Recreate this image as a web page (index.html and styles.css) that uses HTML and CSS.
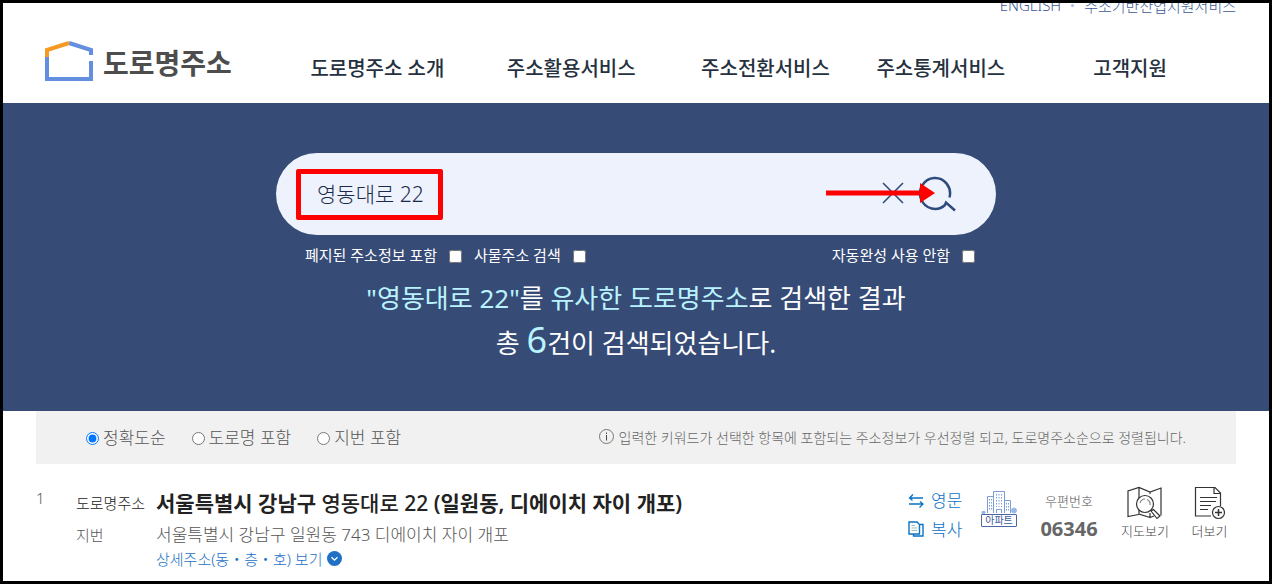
FILE: index.html
```html
<!DOCTYPE html>
<html lang="ko">
<head>
  <meta charset="UTF-8" />
  <meta name="viewport" content="width=device-width, initial-scale=1.0" />
  <title>도로명주소</title>
  <link rel="stylesheet" href="styles.css">
</head>
<body>
  <header class="header">
    <div class="inner">
      <div class="util">
        <a href="#">ENGLISH</a>
        <span class="util-dot"></span>
        <a href="#">주소기반산업지원서비스</a>
      </div>
      <div class="header-main">
        <a href="#" class="logo">
          <svg width="48" height="40" viewBox="0 0 48 40" fill="none" stroke-width="4">
            <path d="M2 16V38H46V20" stroke="#648fe0" />
            <path d="M24 2L46 9V14" stroke="#648fe0" />
            <path d="M2 16V9L24 2" stroke="#f59a23" />
          </svg>
          <span>도로명주소</span>
        </a>
        <nav class="gnb">
          <a href="#">도로명주소 소개</a>
          <a href="#">주소활용서비스</a>
          <a href="#">주소전환서비스</a>
          <a href="#">주소통계서비스</a>
          <a href="#">고객지원</a>
        </nav>
      </div>
    </div>
  </header>

  <section class="hero">
    <form class="search" onsubmit="return false">
      <div class="search-box">
        <input type="text" class="search-input" value="영동대로 22" aria-label="주소 검색">
        <button type="button" class="btn-clear" aria-label="지우기">
          <svg width="22" height="22" viewBox="0 0 22 22" fill="none" stroke="#2f4a7c" stroke-width="1.6">
            <path d="M1 1L21 21M21 1L1 21" />
          </svg>
        </button>
        <button type="submit" class="btn-search" aria-label="검색">
          <svg width="38" height="38" viewBox="0 0 38 38" fill="none" stroke="#2f4a7c" stroke-width="2.5">
            <path d="M30.500 23.500A15 15.500 0 1 0 26 31L27 28.500L36 36.500" />
          </svg>
        </button>
        <!-- 검색어 강조 표시 -->
        <span class="mark-box"></span>
        <svg class="mark-arrow" width="110" height="20" viewBox="0 0 110 20" fill="#f00">
          <path d="M0 7.500H94V0L109 10L94 20V12.500H0Z" />
        </svg>
      </div>
      <div class="search-opts">
        <label>폐지된 주소정보 포함 <input type="checkbox"></label>
        <label>사물주소 검색 <input type="checkbox"></label>
        <label class="opt-right">자동완성 사용 안함 <input type="checkbox"></label>
      </div>
    </form>
    <div class="summary">
      <p><em>"영동대로 22"</em>를 <em>유사한 도로명주소</em>로 검색한 결과</p>
      <p>총 <em class="count">6</em>건이 검색되었습니다.</p>
    </div>
  </section>

  <main class="inner">
    <div class="sort">
      <label><input type="radio" name="sort" checked>정확도순</label>
      <label><input type="radio" name="sort">도로명 포함</label>
      <label><input type="radio" name="sort">지번 포함</label>
      <p class="sort-info">
        <svg width="15" height="15" viewBox="0 0 15 15" fill="none" stroke="#777">
          <circle cx="7.500" cy="7.500" r="7" />
          <path d="M7.500 6V11.500M7.500 3.500V5" stroke="#444" />
        </svg>
        입력한 키워드가 선택한 항목에 포함되는 주소정보가 우선정렬 되고, 도로명주소순으로 정렬됩니다.
      </p>
    </div>

    <article class="result">
      <span class="num">1</span>
      <dl class="addr">
        <dt class="road-label">도로명주소</dt>
        <dd class="road">서울특별시 강남구 <span class="keyword">영동대로 22</span> (일원동, 디에이치 자이 개포)</dd>
        <dt>지번</dt>
        <dd>서울특별시 강남구 일원동 743 디에이치 자이 개포
          <a href="#" class="detail">상세주소(동・층・호) 보기
            <svg width="15" height="15" viewBox="0 0 15 15">
              <circle cx="7.500" cy="7.500" r="7.500" fill="#2270c4" />
              <path d="M4.500 6.200L7.500 9.200L10.500 6.200" fill="none" stroke="#fff" stroke-width="1.300" />
            </svg>
          </a>
        </dd>
      </dl>
      <div class="links">
        <button type="button">
          <svg width="17" height="17" viewBox="0 0 17 17" fill="none" stroke="#0b72c4" stroke-width="1.300">
            <path d="M15 7H1.500M5 3.500L1.500 7L4.500 9.500" />
            <path d="M1 13H15M12 10.500L15 13L11.500 16.500" />
          </svg>
          영문
        </button>
        <button type="button">
          <svg width="17" height="17" viewBox="0 0 17 17" fill="none" stroke="#0b72c4" stroke-width="1.400">
            <path d="M1 2H9L11.500 4.500V14H1Z" />
            <path d="M12 4.500H15V16H5.500V14" />
            <path d="M3.500 5.500H7M3.500 8H9M3.500 10.500H9" stroke="#9bb" stroke-width="1" />
          </svg>
          복사
        </button>
      </div>
      <div class="building">
        <svg width="36" height="23" viewBox="0 0 36 23" fill="none" stroke="#7b9ed8">
          <path d="M1 22.500V20.500H4V22.500Z" fill="#9db7e4" stroke="#9db7e4" />
          <circle cx="33" cy="19.500" r="2.500" fill="#9db7e4" stroke="#9db7e4" />
          <path d="M12.500 22V0.500H23.500V22M12 5.500H6.500V22M24 9.500H29.500V22M15.500 22V18.500H20.500V22" />
          <path d="M15.500 3V16M18 3V16M20.500 3V16M8.500 8V20M10.500 8V20M25.500 12V20M27.500 12V20" stroke-dasharray="1.500 1.500" />
        </svg>
        <span>아파트</span>
      </div>
      <div class="zip">
        <span>우편번호</span>
        <strong>06346</strong>
      </div>
      <button type="button" class="tool tool-map">
        <svg width="36" height="34" viewBox="0 0 36 34" fill="none" stroke="#333" stroke-width="1.200">
          <path d="M11.500 28.500L1 30.500V5L12 1.500L23 6L34 2V29.500M12 1.500V12M23 6V8M23 27V31.500L12 28V24M23 31.500L27 30" />
          <circle cx="18" cy="18" r="8.500" fill="#fff" />
          <path d="M13 17A5.500 5.500 0 0 1 18 13M20 13.500A5 5 0 0 1 23 19" stroke="#888" />
          <path d="M24 25L30 32.500L33 30L26.500 23.500Z" fill="#fff" />
        </svg>
        지도보기
      </button>
      <button type="button" class="tool tool-more">
        <svg width="32" height="34" viewBox="0 0 32 34" fill="none" stroke="#333" stroke-width="1.200">
          <path d="M17 30H1.500V1.500H21L26.500 7V20M20 2V7.500H26" />
          <path d="M6 11.500H23M6 15.500H22M6 19.500H17M6 23.500H14" />
          <circle cx="24.500" cy="26.500" r="6" fill="#fff" />
          <path d="M24.500 23V30M21 26.500H28" stroke-width="1.500" />
        </svg>
        더보기
      </button>
    </article>
  </main>
</body>
</html>
```
FILE: styles.css
```css
* {
  box-sizing: border-box;
}

body {
  margin: 0;
  min-height: 100vh;
  border: 3px solid #000;
  background: #fff;
  color: #555;
  font-family: "Noto Sans", "Noto Sans CJK KR", sans-serif;
  font-size: 15px;
  font-weight: 300;
}

a {
  color: inherit;
  text-decoration: none;
}

p, dl, dd {
  margin: 0;
}

button {
  padding: 0;
  border: none;
  background: none;
  font: inherit;
  cursor: pointer;
}

svg {
  flex: none;
}

input[type="checkbox"], input[type="radio"] {
  width: 13px;
  height: 13px;
  margin: 0;
}

.inner {
  max-width: 1200px;
  margin: 0 auto;
}

/* header */
.header {
  height: 100px;
  overflow: hidden;
}

.util {
  display: flex;
  justify-content: flex-end;
  align-items: center;
  gap: 10px;
  height: 24px;
  margin-top: -10px;
  color: #3d5896;
}

.util-dot {
  width: 3px;
  height: 3px;
  border-radius: 50%;
  background: #a9c0ee;
}

.header-main {
  display: flex;
  align-items: center;
  height: 88px;
}

.logo {
  display: flex;
  align-items: center;
  gap: 10px;
  width: 250px;
  padding-left: 9px;
  color: #4d4d4d;
  font-size: 28px;
  font-weight: 700;
  line-height: 36px;
}

.logo span {
  padding-top: 4px;
}

.gnb {
  flex: 1;
  display: grid;
  grid-template-columns: 183fr 205fr 184fr 167fr 212fr;
  padding-top: 12px;
  text-align: center;
  color: #263140;
  font-size: 20px;
  font-weight: 500;
  white-space: nowrap;
}

/* search */
.hero {
  height: 308px;
  padding-top: 50px;
  background: #364b75;
  color: #fff;
}

.search {
  max-width: 720px;
  margin: 0 auto;
}

.search-box {
  position: relative;
  display: flex;
  align-items: center;
  height: 82px;
  padding: 0 39px 2px;
  border-radius: 41px;
  background: #edf2fd;
}

.search-input {
  flex: 1;
  min-width: 0;
  padding: 0 2px;
  border: none;
  outline: none;
  background: none;
  color: #1b2a4a;
  font: inherit;
  font-size: 21px;
}

.btn-clear, .btn-search {
  display: flex;
}

.btn-clear {
  margin-right: 15px;
}

.mark-box {
  position: absolute;
  left: 20px;
  top: 16px;
  width: 147px;
  height: 51px;
  border: 5px solid #f00;
  border-radius: 2px;
  pointer-events: none;
}

.mark-arrow {
  position: absolute;
  right: 60px;
  top: 30px;
  pointer-events: none;
}

.search-opts {
  display: flex;
  gap: 12px;
  height: 38px;
  padding: 0 21px 0 29px;
  font-weight: 400;
}

.search-opts label {
  display: flex;
  align-items: center;
  gap: 12px;
}

.search-opts input {
  margin-top: 4px;
}

.search-opts .opt-right {
  margin-left: auto;
}

.summary {
  padding-top: 3px;
  text-align: center;
  font-size: 26px;
  font-weight: 400;
  line-height: 45px;
}

.summary em {
  color: #b9f3ff;
  font-style: normal;
}

.summary .count {
  font-size: 36px;
  line-height: 36px;
}

/* sort */
.sort {
  display: flex;
  align-items: center;
  gap: 26px;
  height: 53px;
  padding: 0 50px 2px;
  background: #f1f1f1;
  font-size: 17px;
}

.sort label {
  display: flex;
  align-items: center;
  gap: 4px;
}

.sort input {
  margin-top: 3px;
}

.sort-info {
  display: flex;
  align-items: center;
  gap: 5px;
  margin-left: auto;
  color: #666;
  font-size: 14px;
}

/* result */
.result {
  display: flex;
  padding-top: 21px;
}

.num {
  width: 40px;
  line-height: 26px;
}

.addr {
  flex: 1;
  display: grid;
  grid-template-columns: 80px 1fr;
  align-content: start;
  padding-top: 2px;
  line-height: 32px;
}

.addr dd {
  font-size: 17px;
}

.addr .road-label {
  color: #222;
}

.addr .road {
  color: #222;
  font-size: 21px;
  font-weight: 600;
}

.keyword {
  font-weight: 500;
}

.detail {
  display: flex;
  align-items: center;
  gap: 5px;
  color: #2270c4;
  font-size: 15px;
  line-height: 14px;
}

.links {
  display: flex;
  flex-direction: column;
  width: 73px;
}

.links button {
  display: flex;
  align-items: center;
  gap: 6px;
  height: 29px;
  color: #0b72c4;
  font-size: 17px;
}

.building {
  display: flex;
  flex-direction: column;
  align-items: center;
  width: 36px;
  padding-top: 6px;
}

.building span {
  width: 36px;
  border: 1px solid #4a66a5;
  border-radius: 1px;
  color: #3c5a9c;
  font-size: 10px;
  font-weight: 400;
  line-height: 11px;
  text-align: center;
}

.zip {
  width: 104px;
  text-align: center;
  font-size: 13px;
}

.zip span, .zip strong {
  display: block;
  line-height: 32px;
}

.zip strong {
  color: #666;
  font-size: 20px;
  font-weight: 700;
  line-height: 24px;
}

.tool {
  display: flex;
  flex-direction: column;
  align-items: center;
  gap: 1px;
  height: 56px;
  padding-top: 1px;
  color: #444;
  font-size: 13px;
}

.tool-map {
  width: 48px;
}

.tool-more {
  width: 67px;
  padding-left: 14px;
}
```
